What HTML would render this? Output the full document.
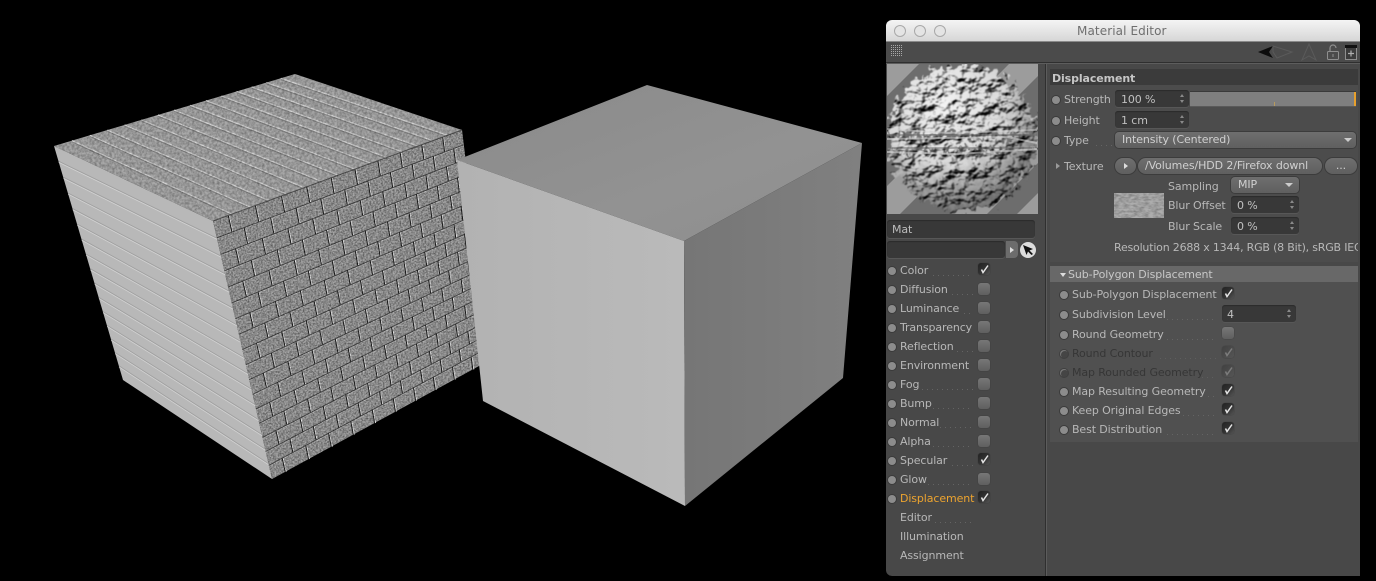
<!DOCTYPE html>
<html><head><meta charset="utf-8"><title>Material Editor</title>
<style>
html,body{margin:0;padding:0;background:#000;width:1376px;height:581px;overflow:hidden}
body{position:relative;font-family:"DejaVu Sans","Liberation Sans",sans-serif;font-size:11px;color:#b8b8b8;letter-spacing:-.11px}
.a{position:absolute}
#scene{position:absolute;left:0;top:0}
#win{position:absolute;left:886px;top:20px;width:474px;height:556px;background:#484848;border-radius:6px 6px 0 6px;overflow:hidden;filter:blur(.3px)}
#win>*{position:absolute}
.t{position:absolute;height:16px;line-height:16px;white-space:nowrap;margin-top:1px}
.rd{position:absolute;width:8px;height:8px;border-radius:50%;background:#8c8c8c;box-shadow:0 0 0 1px #3a3a3a;margin-top:1px}
.rd.off{background:#454545;box-shadow:inset 1px 1px 0 #777,0 0 0 1px #3f3f3f}
.d{position:absolute;height:1px;background:repeating-linear-gradient(90deg,#646464 0 1px,transparent 1px 5px)}
.cb{position:absolute;width:12px;height:12px;border-radius:3px;background:linear-gradient(#777,#5f5f5f);box-shadow:0 0 1px #333}
.cb.on{background:linear-gradient(135deg,#222,#333 55%,#565656)}
.cb.dis{background:linear-gradient(135deg,#404040,#565656)}
.cb svg{position:absolute;left:1px;top:0;width:11px;height:12px}
.f{position:absolute;background:#383838;border-radius:3px;box-shadow:inset 0 1px 1px #2a2a2a,0 1px 0 #575757;color:#c0c0c0;line-height:19px;text-indent:6px;height:17px}
.sp{position:absolute;right:4px;top:4px;width:5px;height:9px}
.sp:before,.sp:after{content:"";position:absolute;left:0;border-left:2.5px solid transparent;border-right:2.5px solid transparent}
.sp:before{top:0;border-bottom:3.5px solid #8a8a8a}
.sp:after{bottom:0;border-top:3.5px solid #8a8a8a}
.b{position:absolute;background:linear-gradient(#6e6e6e,#5f5f5f);border-radius:4px;box-shadow:0 0 0 1px #3c3c3c;color:#d0d0d0;line-height:15px;height:16px}
.ar{position:absolute;width:0;height:0;border-left:4px solid transparent;border-right:4px solid transparent;border-top:4px solid #ccc}
.dis{color:#363636}
</style></head>
<body>
<svg id="scene" width="880" height="581" viewBox="0 0 880 581">
<defs>
<filter id="n" x="0" y="0" width="1" height="1" color-interpolation-filters="sRGB">
<feTurbulence type="fractalNoise" baseFrequency=".6" numOctaves="2" seed="4" result="t"/>
<feColorMatrix in="t" values="0 0 0 0 0 0 0 0 0 0 0 0 0 0 0 .9 0 0 0 -.27"/>
<feComposite in2="SourceAlpha" operator="in"/>
</filter>
<filter id="n2" x="0" y="0" width="1" height="1" color-interpolation-filters="sRGB">
<feTurbulence type="fractalNoise" baseFrequency=".4" numOctaves="3" seed="9" result="t"/>
<feColorMatrix in="t" values="0 0 0 0 0 0 0 0 0 0 0 0 0 0 0 .55 0 0 0 -.17"/>
<feComposite in2="SourceAlpha" operator="in"/>
</filter>
<filter id="sb" x="-5%" y="-5%" width="110%" height="110%"><feGaussianBlur stdDeviation=".35"/></filter>
<linearGradient id="gt" x1="0" y1="0" x2="1" y2="1"><stop offset="0" stop-color="#8a8a8a"/><stop offset=".6" stop-color="#929292"/><stop offset="1" stop-color="#8e8e8e"/></linearGradient>
<linearGradient id="gr" x1="0" y1="0" x2="1" y2="0"><stop offset="0" stop-color="#767676"/><stop offset=".5" stop-color="#7b7b7b"/><stop offset="1" stop-color="#808080"/></linearGradient>
<linearGradient id="gl" x1="0" y1="0" x2="1" y2="0"><stop offset="0" stop-color="#b2b2b2"/><stop offset="1" stop-color="#bababa"/></linearGradient>
</defs>
<!-- brick cube -->
<g filter="url(#sb)">
<polygon points="54,146 295,74 462,130 213,221" fill="#a8a8a8"/>
<polygon points="54,146 213,221 272,479 123,380" fill="#b8b8b8"/>
<polygon points="213,221 462,130 490,360 272,479" fill="#a6a6a6"/>
<g id="bricks"></g>
<polygon points="213,221 462,130 490,360 272,479" fill="#fff" filter="url(#n)"/>
<polygon points="54,146 295,74 462,130 213,221" fill="#fff" filter="url(#n2)"/>
</g>
<!-- smooth cube -->
<polygon points="647,85 862,143 684,241 457,160" fill="url(#gt)"/>
<polygon points="457,160 684,241 685,506 483,401" fill="url(#gl)"/>
<polygon points="684,241 862,143 843,378 685,506" fill="url(#gr)"/>
</svg>

<div id="win">
  <div style="left:0;top:0;width:474px;height:21px;background:linear-gradient(#f4f4f4,#d6d6d6)"></div>
  <div style="left:0;top:21px;width:474px;height:1px;background:#8a8a8a"></div>
  <div style="left:191px;top:3px;height:16px;line-height:16px;font-size:12px;color:#6f6f6f;letter-spacing:.1px">Material Editor</div>
  <svg style="left:0;top:0" width="70" height="22"><g fill="#e4e4e4" stroke="#a8a8a8"><circle cx="14" cy="11" r="5.5"/><circle cx="34" cy="11" r="5.5"/><circle cx="54" cy="11" r="5.5"/></g></svg>
  <div style="left:0;top:22px;width:474px;height:20px;background:#4b4b4b"></div>
  <div style="left:0;top:42px;width:474px;height:1px;background:#2f2f2f"></div>
  <div style="left:0;top:43px;width:474px;height:1px;background:#5d5d5d"></div>
  <div style="left:5px;top:25px;width:12px;height:12px;background:repeating-linear-gradient(0deg,#4b4b4b 0 1px,transparent 1px 2px),repeating-linear-gradient(90deg,#a8a8a8 0 1px,transparent 1px 2px)"></div>
  <svg style="left:364px;top:22px" width="110" height="20" viewBox="0 0 110 20">
    <path d="M8 10L23 4 19 10 23 16Z" fill="#0c0c0c"/>
    <path d="M23 4L42 10 27 16 23 10Z" fill="none" stroke="#5a5a5a"/>
    <path d="M52 18L59 2 66 18 59 14Z" fill="none" stroke="#5a5a5a"/>
    <rect x="77.5" y="9.5" width="11" height="8" rx="1" fill="none" stroke="#8f8f8f"/>
    <path d="M80 9V6a3 3 0 0 1 6 0" fill="none" stroke="#8f8f8f" stroke-width="1.2"/>
    <path d="M83 12v3" stroke="#8f8f8f"/>
    <rect x="95.5" y="3.5" width="11" height="14" fill="#3c3c3c" stroke="#8f8f8f"/><rect x="95" y="3" width="12" height="3" fill="#111"/>
    <path d="M101 8.5v6M98 11.500h6" stroke="#b0b0b0" stroke-width="1.200"/>
  </svg>
  <div style="left:159px;top:44px;width:1px;height:512px;background:#2f2f2f"></div>
  <div style="left:160px;top:44px;width:1px;height:512px;background:#5c5c5c"></div>

  <!-- preview -->
  <svg style="left:1px;top:44px" width="151" height="150" viewBox="0 0 151 150">
    <defs>
      <filter id="s" x="-20%" y="-20%" width="140%" height="140%" color-interpolation-filters="sRGB">
        <feTurbulence type="fractalNoise" baseFrequency=".16 .14" numOctaves="2" seed="11" result="t2"/>
        <feDisplacementMap in="SourceGraphic" in2="t2" scale="24" xChannelSelector="R" yChannelSelector="G" result="d"/>
        <feTurbulence type="fractalNoise" baseFrequency=".075 .09" numOctaves="3" seed="7" result="t"/>
        <feDiffuseLighting in="t" surfaceScale="7" diffuseConstant="1.25" lighting-color="#fff" result="l"><feDistantLight azimuth="235" elevation="52"/></feDiffuseLighting>
        <feComposite in="l" in2="d" operator="arithmetic" k1="1" result="m"/>
        <feGaussianBlur in="m" stdDeviation=".4"/>
      </filter>
      <radialGradient id="sg" cx=".38" cy=".28" r=".9"><stop offset="0" stop-color="#f4f4f4"/><stop offset=".45" stop-color="#d8d8d8"/><stop offset=".72" stop-color="#8a8a8a"/><stop offset="1" stop-color="#2c2c2c"/></radialGradient>
      <clipPath id="pc"><rect width="151" height="150"/></clipPath>
    </defs>
    <rect width="151" height="150" fill="#6d6d6d"/>
    <g fill="#9c9c9c"><polygon points="0,0 32,0 0,32"/><polygon points="122,0 151,0 151,12 12,151 0,151 0,122"/><polygon points="213,0 250,0 100,150 63,150"/><polygon points="151,129 151,157 130,150"/></g>
    <g clip-path="url(#pc)">
      <g filter="url(#s)">
        <circle cx="75" cy="74" r="74" fill="url(#sg)"/>
        <rect x="-3" y="70" width="156" height="4" fill="#777"/>
        <rect x="-3" y="52" width="156" height="2" fill="#c8c8c8"/>
        <rect x="-3" y="86" width="156" height="2" fill="#666"/>
      </g>
      <path d="M0 65L60 69 150 66M0 75L120 73 150 79M0 88 70 90 150 85" stroke="#d8d8d8" stroke-width="2" fill="none" opacity=".55"/>
      <path d="M0 71H150M5 84H145" stroke="#666" stroke-width="1.500" fill="none" opacity=".6"/>
    </g>
  </svg>

  <!-- name fields -->
  <div class="f" style="left:1px;top:200px;width:148px;height:18px;line-height:19px;color:#bcbcbc;text-indent:5px">Mat</div>
  <div class="f" style="left:1px;top:221px;width:118px"></div>
  <div style="left:120px;top:221px;width:12px;height:17px;background:#6c6c6c;border-radius:0 4px 4px 0"></div>
  <div style="left:124px;top:227px;width:0;height:0;border-top:3px solid transparent;border-bottom:3px solid transparent;border-left:4px solid #ddd"></div>
  <svg style="left:133px;top:221px" width="18" height="18" viewBox="0 0 18 18"><circle cx="9" cy="9" r="8" fill="#dcdcdc"/><path d="M4 4L14 8 10.500 9.500 14 13 12.500 14 9 10.500 7.500 14Z" fill="#111"/></svg>

  <!-- channel list -->
  <div class="rd" style="left:2px;top:246px"></div><div class="t" style="left:14px;top:242px">Color</div><div class="d" style="left:47px;top:255px;width:40px"></div>
  <div class="cb on" style="left:92px;top:243px"><svg viewBox="0 0 11 12"><path d="M2.500 6.500L4 9.500 9 2.500" fill="none" stroke="#e4e4e4" stroke-width="1.500"/></svg></div>
  <div class="rd" style="left:2px;top:265px"></div><div class="t" style="left:14px;top:261px">Diffusion</div><div class="d" style="left:66px;top:274px;width:21px"></div><div class="cb" style="left:92px;top:263px"></div>
  <div class="rd" style="left:2px;top:284px"></div><div class="t" style="left:14px;top:280px">Luminance</div><div class="d" style="left:78px;top:293px;width:9px"></div><div class="cb" style="left:92px;top:282px"></div>
  <div class="rd" style="left:2px;top:303px"></div><div class="t" style="left:14px;top:299px">Transparency</div><div class="cb" style="left:92px;top:301px"></div>
  <div class="rd" style="left:2px;top:322px"></div><div class="t" style="left:14px;top:318px">Reflection</div><div class="d" style="left:71px;top:331px;width:16px"></div><div class="cb" style="left:92px;top:320px"></div>
  <div class="rd" style="left:2px;top:341px"></div><div class="t" style="left:14px;top:337px">Environment</div><div class="cb" style="left:92px;top:339px"></div>
  <div class="rd" style="left:2px;top:360px"></div><div class="t" style="left:14px;top:356px">Fog</div><div class="d" style="left:36px;top:369px;width:51px"></div><div class="cb" style="left:92px;top:358px"></div>
  <div class="rd" style="left:2px;top:379px"></div><div class="t" style="left:14px;top:375px">Bump</div><div class="d" style="left:47px;top:388px;width:40px"></div><div class="cb" style="left:92px;top:377px"></div>
  <div class="rd" style="left:2px;top:398px"></div><div class="t" style="left:14px;top:394px">Normal</div><div class="d" style="left:54px;top:407px;width:33px"></div><div class="cb" style="left:92px;top:396px"></div>
  <div class="rd" style="left:2px;top:417px"></div><div class="t" style="left:14px;top:413px">Alpha</div><div class="d" style="left:47px;top:426px;width:40px"></div><div class="cb" style="left:92px;top:415px"></div>
  <div class="rd" style="left:2px;top:436px"></div><div class="t" style="left:14px;top:432px">Specular</div><div class="d" style="left:66px;top:445px;width:21px"></div>
  <div class="cb on" style="left:92px;top:433px"><svg viewBox="0 0 11 12"><path d="M2.500 6.500L4 9.500 9 2.500" fill="none" stroke="#e4e4e4" stroke-width="1.500"/></svg></div>
  <div class="rd" style="left:2px;top:455px"></div><div class="t" style="left:14px;top:451px">Glow</div><div class="d" style="left:42px;top:464px;width:45px"></div><div class="cb" style="left:92px;top:453px"></div>
  <div class="rd" style="left:2px;top:474px"></div><div class="t" style="left:14px;top:470px;color:#eda42f">Displacement</div>
  <div class="cb on" style="left:92px;top:471px"><svg viewBox="0 0 11 12"><path d="M2.500 6.500L4 9.500 9 2.500" fill="none" stroke="#e4e4e4" stroke-width="1.500"/></svg></div>
  <div class="t" style="left:14px;top:489px">Editor</div><div class="d" style="left:49px;top:502px;width:38px"></div>
  <div class="t" style="left:14px;top:508px">Illumination</div>
  <div class="t" style="left:14px;top:527px">Assignment</div>

  <!-- Displacement -->
  <div style="left:164px;top:65px;width:308px;height:177px;background:#4c4c4c"></div>
  <div style="left:164px;top:49px;width:308px;height:16px;background:#3b3b3b"></div>
  <div class="t" style="left:166px;top:50px;font-weight:bold;color:#c6c6c6;font-size:11px">Displacement</div>

  <div class="rd" style="left:166px;top:75px"></div><div class="t" style="left:178px;top:71px">Strength</div>
  <div class="f" style="left:229px;top:70px;width:74px"><span style="margin-left:0">100 %</span><i class="sp"></i></div>
  <div style="left:304px;top:72px;width:166px;height:14px;background:#7f7f7f;box-shadow:0 -1px 0 #3a3a3a,0 1px 0 #5a5a5a"></div>
  <div style="left:468px;top:72px;width:2px;height:14px;background:#e8a02c"></div>
  <div style="left:388px;top:82px;width:1px;height:4px;background:#b89a5c"></div>

  <div class="rd" style="left:166px;top:96px"></div><div class="t" style="left:178px;top:92px">Height</div>
  <div class="f" style="left:229px;top:91px;width:74px">1 cm<i class="sp"></i></div>

  <div class="rd" style="left:166px;top:116px"></div><div class="t" style="left:178px;top:112px">Type</div><div class="d" style="left:210px;top:125px;width:16px"></div>
  <div class="b" style="left:229px;top:112px;width:241px;text-indent:7px">Intensity (Centered)<i class="ar" style="right:4px;top:6px"></i></div>

  <div style="left:170px;top:143px;width:0;height:0;border-top:3px solid transparent;border-bottom:3px solid transparent;border-left:4px solid #9a9a9a"></div>
  <div class="t" style="left:178px;top:138px">Texture</div>
  <div class="b" style="left:229px;top:138px;width:21px;border-radius:9px"></div>
  <div style="left:238px;top:143px;width:0;height:0;border-top:3px solid transparent;border-bottom:3px solid transparent;border-left:4px solid #ddd"></div>
  <div class="b" style="left:252px;top:138px;width:184px;border-radius:9px;text-indent:7px;line-height:16px">/Volumes/HDD 2/Firefox downl</div>
  <div class="b" style="left:439px;top:138px;width:32px;border-radius:9px;text-align:center">...</div>

  <div class="t" style="left:282px;top:158px">Sampling</div>
  <div class="b" style="left:345px;top:157px;width:68px;text-indent:7px">MIP<i class="ar" style="right:6px;top:6px"></i></div>
  <svg style="left:228px;top:173px" width="50" height="25"><defs><filter id="th" x="0" y="0" width="1" height="1" color-interpolation-filters="sRGB"><feTurbulence type="fractalNoise" baseFrequency=".2 .5" numOctaves="2" seed="3"/><feColorMatrix values="0 0 0 0 .1 0 0 0 0 .1 0 0 0 0 .1 .6 0 0 0 -.2"/><feComposite in2="SourceAlpha" operator="in"/></filter></defs><rect width="50" height="25" fill="#adadad"/><rect width="50" height="25" fill="#fff" filter="url(#th)"/></svg>
  <div class="t" style="left:282px;top:177px">Blur Offset</div>
  <div class="f" style="left:345px;top:176px;width:68px">0 %<i class="sp"></i></div>
  <div class="t" style="left:282px;top:198px">Blur Scale</div>
  <div class="f" style="left:345px;top:197px;width:68px">0 %<i class="sp"></i></div>
  <div class="t" style="left:228px;top:219px;width:244px;overflow:hidden;letter-spacing:-.2px">Resolution 2688 x 1344, RGB (8 Bit), sRGB IEC</div>

  <!-- Sub-polygon -->
  <div style="left:164px;top:262px;width:308px;height:160px;background:#505050"></div>
  <div style="left:164px;top:246px;width:308px;height:16px;background:#686868"></div>
  <div class="ar" style="left:174px;top:253px;border-left-width:3.5px;border-right-width:3.5px;border-top-color:#ddd"></div>
  <div class="t" style="left:182px;top:246px;color:#c8c8c8">Sub-Polygon Displacement</div>

  <div class="rd" style="left:174px;top:270px"></div><div class="t" style="left:186px;top:266px">Sub-Polygon Displacement</div>
  <div class="cb on" style="left:336px;top:267px"><svg viewBox="0 0 11 12"><path d="M2.500 6.500L4 9.500 9 2.500" fill="none" stroke="#e4e4e4" stroke-width="1.500"/></svg></div>

  <div class="rd" style="left:174px;top:290px"></div><div class="t" style="left:186px;top:286px">Subdivision Level</div><div class="d" style="left:281px;top:299px;width:50px"></div>
  <div class="f" style="left:336px;top:285px;width:74px;text-indent:5px">4<i class="sp"></i></div>

  <div class="rd" style="left:174px;top:310px"></div><div class="t" style="left:186px;top:306px">Round Geometry</div><div class="d" style="left:281px;top:319px;width:50px"></div><div class="cb" style="left:336px;top:307px"></div>

  <div class="rd off" style="left:174px;top:329px"></div><div class="t dis" style="left:186px;top:325px">Round Contour</div><div class="d" style="left:274px;top:338px;width:57px;opacity:.7"></div>
  <div class="cb dis" style="left:336px;top:326px"><svg viewBox="0 0 11 12"><path d="M2.500 6.500L4 9.500 9 2.500" fill="none" stroke="#7c7c7c" stroke-width="1.500"/></svg></div>

  <div class="rd off" style="left:174px;top:348px"></div><div class="t dis" style="left:186px;top:344px">Map Rounded Geometry</div><div class="d" style="left:316px;top:357px;width:15px;opacity:.7"></div>
  <div class="cb dis" style="left:336px;top:345px"><svg viewBox="0 0 11 12"><path d="M2.500 6.500L4 9.500 9 2.500" fill="none" stroke="#7c7c7c" stroke-width="1.500"/></svg></div>

  <div class="rd" style="left:174px;top:367px"></div><div class="t" style="left:186px;top:363px">Map Resulting Geometry</div><div class="d" style="left:322px;top:376px;width:9px"></div>
  <div class="cb on" style="left:336px;top:364px"><svg viewBox="0 0 11 12"><path d="M2.500 6.500L4 9.500 9 2.500" fill="none" stroke="#e4e4e4" stroke-width="1.500"/></svg></div>

  <div class="rd" style="left:174px;top:386px"></div><div class="t" style="left:186px;top:382px">Keep Original Edges</div><div class="d" style="left:297px;top:395px;width:34px"></div>
  <div class="cb on" style="left:336px;top:383px"><svg viewBox="0 0 11 12"><path d="M2.500 6.500L4 9.500 9 2.500" fill="none" stroke="#e4e4e4" stroke-width="1.500"/></svg></div>

  <div class="rd" style="left:174px;top:405px"></div><div class="t" style="left:186px;top:401px">Best Distribution</div><div class="d" style="left:281px;top:414px;width:50px"></div>
  <div class="cb on" style="left:336px;top:402px"><svg viewBox="0 0 11 12"><path d="M2.500 6.500L4 9.500 9 2.500" fill="none" stroke="#e4e4e4" stroke-width="1.500"/></svg></div>
</div>

<script>
(function(){
function H(p){var x0=p[0][0],y0=p[0][1],x1=p[1][0],y1=p[1][1],x2=p[2][0],y2=p[2][1],x3=p[3][0],y3=p[3][1];
var dx1=x1-x2,dx2=x3-x2,sx=x0-x1+x2-x3,dy1=y1-y2,dy2=y3-y2,sy=y0-y1+y2-y3,D=dx1*dy2-dx2*dy1;
var g=(sx*dy2-dx2*sy)/D,h=(dx1*sy-sx*dy1)/D,a=x1-x0+g*x1,b=x3-x0+h*x3,d=y1-y0+g*y1,e=y3-y0+h*y3;
return function(u,v){var w=g*u+h*v+1;return [(a*u+b*v+x0)/w,(d*u+e*v+y0)/w];};}
var s='';
function L(P,Q,c,w,dx,dy){dx=dx||0;dy=dy||0;s+='<line x1="'+(P[0]+dx).toFixed(1)+'" y1="'+(P[1]+dy).toFixed(1)+'" x2="'+(Q[0]+dx).toFixed(1)+'" y2="'+(Q[1]+dy).toFixed(1)+'" stroke="'+c+'" stroke-width="'+w+'"/>';}
var i,k;
/* top face */
var T=H([[54,146],[213,221],[462,130],[295,74]]);
for(i=1;i<15;i++){var v=i/15;L(T(0,v),T(1,v),'#d4d4d4',1.2);L(T(0,v),T(1,v),'#868686',1,0,1.3);}
/* left face */
var F=H([[54,146],[213,221],[272,479],[123,380]]);
for(i=1;i<16;i++){var a=F(0,i/16),b=F(1,i/16);
L(a,b,'#d2d2d2',.9);L(a,b,'#a0a0a0',.9,0,-1);
}
/* right face */
var R=H([[213,221],[462,130],[490,360],[272,479]]);
var rows=17,cols=10.5;
for(i=0;i<rows;i++){
 var v0=i/rows,v1=(i+1)/rows;
 if(i){L(R(0,v0),R(1,v0),'#4c4c4c',1);L(R(0,v0),R(1,v0),'#c4c4c4',.8,0,1);}
 for(k=0;k<=11;k++){var u=(k+(i%2?0:.55))/cols;if(u<=0||u>=1)continue;
  L(R(u,v0),R(u,v1),'#1e1e1e',1);L(R(u,v0),R(u,v1),'#ececec',.9,1,0);}
}
L(R(0,0),R(1,0),'#555',1);
document.getElementById('bricks').innerHTML=s;
})();
</script>
</body></html>
